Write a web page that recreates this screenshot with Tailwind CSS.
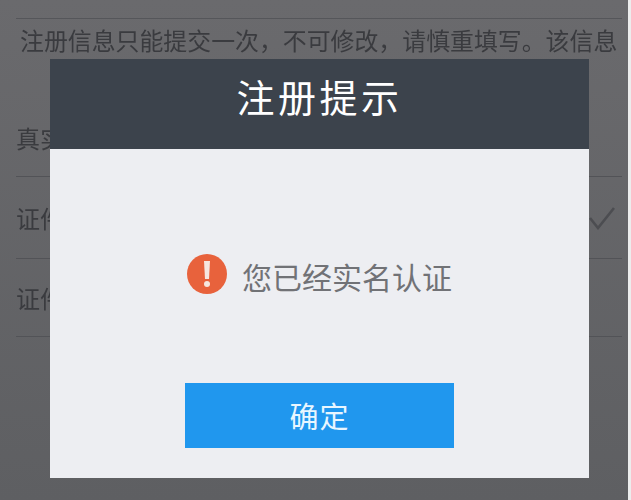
<!DOCTYPE html>
<html lang="zh-CN">
<head>
    <meta charset="UTF-8">
    <title>注册提示</title>
    <script src="https://cdn.jsdelivr.net/npm/@tailwindcss/browser@4"></script>
</head>
<body class="m-0 bg-[#eceded]">
    <div class="relative w-[628px] h-[500px] overflow-hidden bg-linear-to-b from-[#6a6a6d] to-[#5e5f62] font-['Noto_Sans_CJK_SC','Liberation_Sans',sans-serif] text-[#3a3b3f]">
        <!-- page behind the overlay -->
        <div class="ml-[16px] mr-[6px] pt-[18px] blur-[0.6px]">
            <div class="h-[44px] border-t border-[#55565a] pl-[4px] pb-[2px] flex items-center text-[23.9px] leading-none whitespace-nowrap">注册信息只能提交一次，不可修改，请慎重填写。该信息</div>
            <div class="h-[115px] border-b border-[#525357] flex items-end pb-[26px] text-[24px] leading-none">真实姓名</div>
            <div class="h-[82px] border-b border-[#525357] flex items-center justify-between pr-[7px] text-[24px] leading-none">
                <span>证件类型</span>
                <svg class="w-[26px] h-[24px]" viewBox="0 0 26 24" fill="none" stroke="#4c4d51" stroke-width="2.6"><path d="M1 12l8 10L25 2"/></svg>
            </div>
            <div class="h-[78px] border-b border-[#525357] flex items-center text-[24px] leading-none">证件号码</div>
        </div>

        <!-- dialog -->
        <div class="absolute left-[50px] top-[59px] w-[539px] h-[419px] flex flex-col bg-[#edeef2]">
            <div class="h-[90px] pb-[16px] bg-[#3c434c] flex items-center justify-center text-white text-[38px] tracking-[3.5px] leading-none">注册提示</div>
            <div class="flex-1 flex flex-col items-center pt-[104px]">
                <div class="flex items-center gap-[15px]">
                    <svg class="w-[40px] h-[42px]" viewBox="0 0 40 42">
                        <circle cx="20" cy="21" r="20" fill="#e8623c"/>
                        <path d="M17 8h6l-1 18h-4z" fill="#f6e6df"/>
                        <circle cx="20" cy="31" r="3" fill="#f6e6df"/>
                    </svg>
                    <span class="mt-[4px] text-[30px] leading-none text-[#717276]">您已经实名认证</span>
                </div>
                <button class="mt-[88px] w-[269px] h-[65px] bg-[#2097ee] text-[#e8f6ff] text-[29px] leading-none tracking-[1px]">确定</button>
            </div>
        </div>
    </div>
</body>
</html>
